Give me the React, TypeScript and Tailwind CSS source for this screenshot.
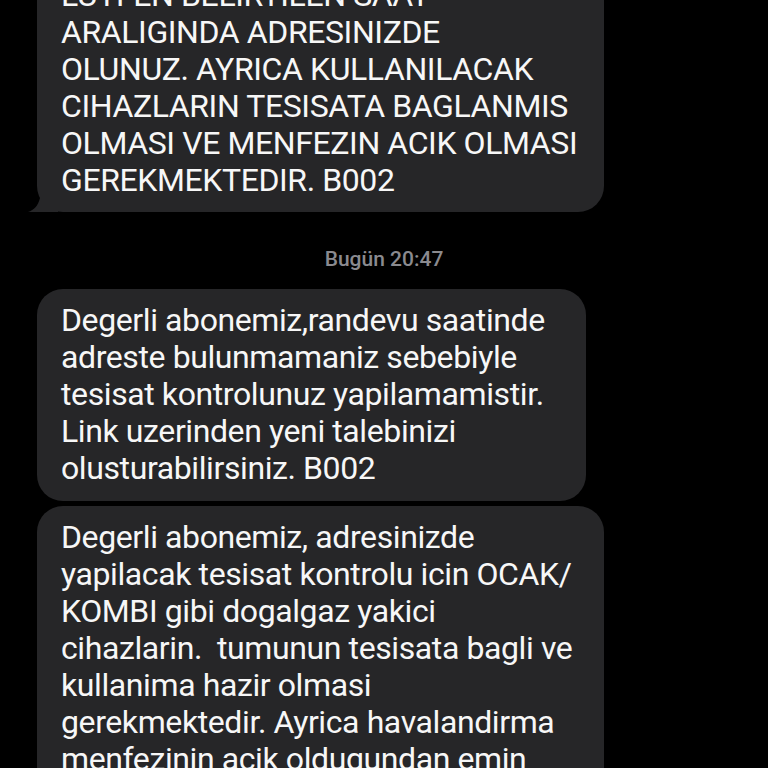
import React from "react";

const b1 = [
  "LUTFEN BELIRTILEN SAAT",
  "ARALIGINDA ADRESINIZDE",
  "OLUNUZ. AYRICA KULLANILACAK",
  "CIHAZLARIN TESISATA BAGLANMIS",
  "OLMASI VE MENFEZIN ACIK OLMASI",
  "GEREKMEKTEDIR. B002",
];
const b2 = [
  "Degerli abonemiz,randevu saatinde",
  "adreste bulunmamaniz sebebiyle",
  "tesisat kontrolunuz yapilamamistir.",
  "Link uzerinden yeni talebinizi",
  "olusturabilirsiniz. B002",
];
const b3 = [
  "Degerli abonemiz, adresinizde",
  "yapilacak tesisat kontrolu icin OCAK/",
  "KOMBI gibi dogalgaz yakici",
  "cihazlarin.\u00a0 tumunun tesisata bagli ve",
  "kullanima hazir olmasi",
  "gerekmektedir. Ayrica havalandirma",
  "menfezinin acik oldugundan emin",
  "olunuz.",
];

function Lines({ lines }: { lines: string[] }) {
  return (
    <div className="text-[32px] leading-[37px] text-[#f7f7f7] tracking-[-0.4px]" style={{ fontFamily: "Roboto, 'Noto Sans', sans-serif" }}>
      {lines.map((l, i) => (
        <div key={i} className="whitespace-nowrap">{l}</div>
      ))}
    </div>
  );
}

export default function App() {
  return (
    <div className="w-[768px] h-[768px] overflow-hidden bg-black">
      <div className="flex flex-col pl-[37px]">
        <div className="relative -mt-[23px] w-[567px] rounded-b-[26px] bg-[#262628] pl-[24px] pb-[13px]">
          <Lines lines={b1} />
          <svg className="absolute left-[-9px] bottom-0" width="30" height="24" viewBox="0 0 30 24">
            <path d="M30 0 L30 24 L0 24 C6 22 10 18 12 10 L12 0 Z" fill="#262628" />
          </svg>
        </div>
        <div className="pt-[35px] pb-[18px] pr-[37px] text-center text-[21px] leading-[24px] font-medium text-[#8a8a8f]" style={{ fontFamily: "Roboto, 'Noto Sans', sans-serif" }}>
          Bugün 20:47
        </div>
        <div className="w-[549px] rounded-[26px] bg-[#262628] pl-[24px] pt-[13px] pb-[14px]">
          <Lines lines={b2} />
        </div>
        <div className="mt-[5px] w-[567px] rounded-[26px] bg-[#262628] pl-[24px] pt-[13px] pb-[12px]">
          <Lines lines={b3} />
        </div>
      </div>
    </div>
  );
}
